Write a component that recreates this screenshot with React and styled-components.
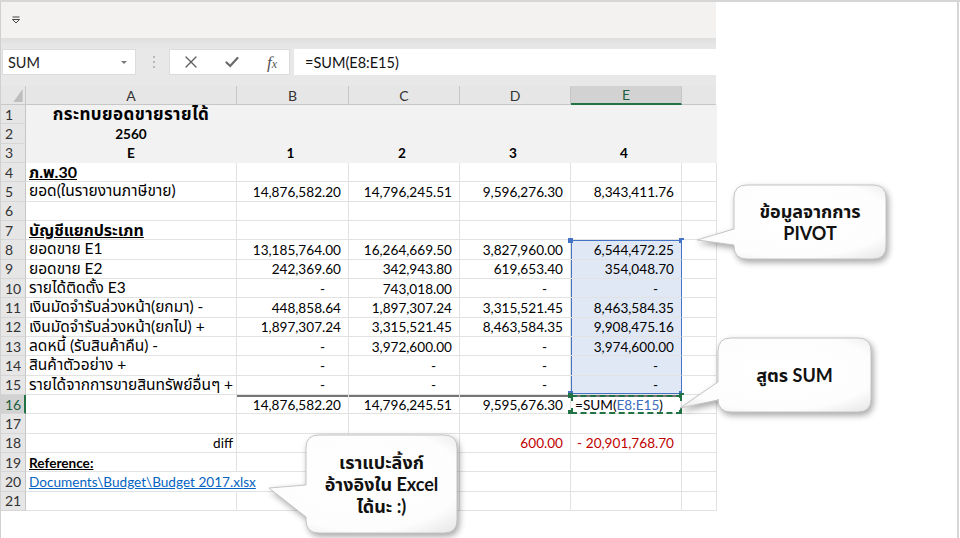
import styled, { createGlobalStyle } from "styled-components";

const FONT = `"Lato", "Noto Sans", "Noto Sans Thai", "Leelawadee UI", Tahoma, sans-serif`;

const GlobalStyle = createGlobalStyle`
  html, body {
    margin: 0;
    padding: 0;
    background: #fff;
  }
  body {
    font-family: ${FONT};
    overflow: hidden;
  }
`;

const COLS = "25px 211px 112px 111px 111px 111px 35px";
const ROW_H = 19.33;
const THAI = /[\u0E00-\u0E7F]/;

const rows = [
  { n: 1, band: true, a: "กระทบยอดขายรายได้", aKind: "title", big: true },
  { n: 2, band: true, a: "2560", aKind: "title" },
  { n: 3, band: true, a: "E", aKind: "title", vals: ["1", "2", "3", "4"], valKind: "title" },
  { n: 4, a: "ภ.พ.30", aKind: "heading" },
  { n: 5, a: "ยอด(ในรายงานภาษีขาย)", vals: ["14,876,582.20", "14,796,245.51", "9,596,276.30", "8,343,411.76"] },
  { n: 6 },
  { n: 7, a: "บัญชีแยกประเภท", aKind: "heading" },
  { n: 8, a: "ยอดขาย E1", vals: ["13,185,764.00", "16,264,669.50", "3,827,960.00", "6,544,472.25"] },
  { n: 9, a: "ยอดขาย E2", vals: ["242,369.60", "342,943.80", "619,653.40", "354,048.70"] },
  { n: 10, a: "รายได้ติดตั้ง E3", vals: ["-", "743,018.00", "-", "-"] },
  { n: 11, a: "เงินมัดจำรับล่วงหน้า(ยกมา) -", vals: ["448,858.64", "1,897,307.24", "3,315,521.45", "8,463,584.35"] },
  { n: 12, a: "เงินมัดจำรับล่วงหน้า(ยกไป) +", vals: ["1,897,307.24", "3,315,521.45", "8,463,584.35", "9,908,475.16"] },
  { n: 13, a: "ลดหนี้ (รับสินค้าคืน) -", vals: ["-", "3,972,600.00", "-", "3,974,600.00"] },
  { n: 14, a: "สินค้าตัวอย่าง +", vals: ["-", "-", "-", "-"] },
  { n: 15, a: "รายได้จากการขายสินทรัพย์อื่นๆ +", vals: ["-", "-", "-", "-"] },
  { n: 16, vals: ["14,876,582.20", "14,796,245.51", "9,595,676.30", null], total: true },
  { n: 17 },
  { n: 18, a: "diff", aKind: "right", vals: ["", "", "600.00", "20,901,768.70"], red: true, negE: true },
  { n: 19, a: "Reference:", aKind: "heading" },
  { n: 20, a: "Documents\\Budget\\Budget 2017.xlsx", aKind: "link" },
  { n: 21 },
];

export default function App() {
  return (
    <>
      <GlobalStyle />
      <Page>
        <Excel>
          <Ribbon>
            <QuickAccess viewBox="0 0 10 10">
              <line x1="1.5" y1="2" x2="8.5" y2="2" />
              <path d="M1.5 4.5 L8.5 4.5 L5 8 Z" />
            </QuickAccess>
          </Ribbon>
          <RibbonShade />
          <FormulaBar>
            <NameBox>
              SUM
              <Caret />
            </NameBox>
            <Grip viewBox="0 0 4 16">
              <circle cx="2" cy="3" r="1" />
              <circle cx="2" cy="8" r="1" />
              <circle cx="2" cy="13" r="1" />
            </Grip>
            <FxBox>
              <BarIcon viewBox="0 0 14 14">
                <path d="M2 2 L12 12 M12 2 L2 12" />
              </BarIcon>
              <BarIcon viewBox="0 0 14 14" $bold>
                <path d="M1.5 7.5 L5.2 11 L12.5 3" />
              </BarIcon>
              <Fx>
                f<sub>x</sub>
              </Fx>
            </FxBox>
            <FormulaInput>=SUM(E8:E15)</FormulaInput>
          </FormulaBar>
          <Sheet>
            <Corner>
              <CornerMark viewBox="0 0 10 14">
                <path d="M10 0 L10 14 L0 14 Z" />
              </CornerMark>
            </Corner>
            {["A", "B", "C", "D", "E"].map((c) => (
              <ColHead key={c} $active={c === "E"}>
                {c}
              </ColHead>
            ))}
            <ColHead />
            {rows.map((r) => (
              <SheetRow key={r.n} row={r} />
            ))}
          </Sheet>
        </Excel>
        <Slide />

        <Callout
          $x={734}
          $y={183}
          $w={152}
          $h={74}
          tail={[44, 60, -37, 55]}
          id="c1"
          lines={["ข้อมูลจากการ", "PIVOT"]}
        />
        <Callout
          $x={718}
          $y={336}
          $w={153}
          $h={74}
          tail={[44, 62, -38, 70]}
          id="c2"
          lines={["สูตร SUM"]}
        />
        <Callout
          $x={306}
          $y={433}
          $w={151}
          $h={98}
          tail={[50, 82, -37, 53]}
          id="c3"
          lines={["เราแปะลิ้งก์", "อ้างอิงใน Excel", "ได้นะ :)"]}
        />
      </Page>
    </>
  );
}

function SheetRow({ row }) {
  const { n, band, a, aKind, big, vals = [], valKind, total, red, negE } = row;
  const color = red ? "#c00000" : undefined;

  return (
    <>
      <RowHead $active={n === 16}>{n}</RowHead>
      <Cell
        $band={band}
        $align={aKind === "title" ? "center" : aKind === "right" ? "right" : "left"}
        $bold={aKind === "title" || aKind === "heading"}
        $under={aKind === "heading"}
        $thai={a && THAI.test(a)}
        $big={big}
        $overflow={aKind === "link"}
      >
        {aKind === "link" ? <Link>{a}</Link> : a}
      </Cell>
      {[0, 1, 2, 3].map((i) => {
        const v = vals[i];
        const isE = i === 3;
        const sel = isE && n >= 8 && n <= 15;

        if (isE && total) {
          return (
            <FormulaCell key={i} $rule>
              =SUM(<Ref>E8:E15</Ref>)
              <Handle $corner="tl" $green />
              <Handle $corner="tr" $green />
              <Handle $corner="bl" $green />
              <Handle $corner="br" $green />
            </FormulaCell>
          );
        }

        return (
          <Cell
            key={i}
            $band={band}
            $align={valKind === "title" ? "center" : "right"}
            $bold={valKind === "title"}
            $padR={v === "-" ? 23 : 7}
            $color={color}
            $sel={sel}
            $selTop={sel && n === 8}
            $selBottom={sel && n === 15}
            $rule={total}
          >
            {isE && negE && <Dash>-</Dash>}
            {v}
            {sel && n === 8 && (
              <>
                <Handle $corner="tl" />
                <Handle $corner="tr" />
              </>
            )}
            {sel && n === 15 && (
              <>
                <Handle $corner="bl" />
                <Handle $corner="br" />
              </>
            )}
          </Cell>
        );
      })}
      <Cell $band={band} />
    </>
  );
}

function Callout({ $x, $y, $w, $h, tail, id, lines }) {
  const [y1, y2, tx, ty] = tail;
  const r = 13;
  const d = `M${r},0 H${$w - r} Q${$w},0 ${$w},${r} V${$h - r} Q${$w},${$h} ${$w - r},${$h} H${r} Q0,${$h} 0,${$h - r} V${y2} L${tx},${ty} L0,${y1} V${r} Q0,0 ${r},0 Z`;

  return (
    <CalloutBox $x={$x} $y={$y} $w={$w} $h={$h}>
      <CalloutShape width={$w} height={$h}>
        <defs>
          <radialGradient id={`${id}-fill`} cx="50%" cy="45%" r="75%">
            <stop offset="0%" stopColor="#ffffff" />
            <stop offset="70%" stopColor="#fdfdfd" />
            <stop offset="100%" stopColor="#e4e4e4" />
          </radialGradient>
        </defs>
        <path d={d} fill={`url(#${id}-fill)`} stroke="#c4c4c4" strokeWidth="1" />
      </CalloutShape>
      <CalloutText>
        {lines.map((l) => (
          <div key={l}>{l}</div>
        ))}
      </CalloutText>
    </CalloutBox>
  );
}

const Page = styled.div`
  position: relative;
  width: 960px;
  height: 538px;
  box-sizing: border-box;
  border-top: 2px solid #d6d6d6;
  display: flex;
  overflow: hidden;
`;

const Excel = styled.div`
  width: 716px;
  display: flex;
  flex-direction: column;
  border-left: 1px solid #d0d0d0;
  box-sizing: border-box;
`;

const Slide = styled.div`
  flex: 1;
  margin-right: 1px;
  border-right: 2px solid #d6d6d6;
  background: #fff;
`;

const Ribbon = styled.div`
  height: 36px;
  background: #f3f2f1;
  display: flex;
  align-items: center;
  padding-left: 10px;
`;

const QuickAccess = styled.svg`
  width: 10px;
  height: 10px;
  fill: none;
  stroke: #444;
  stroke-width: 1;
`;

const RibbonShade = styled.div`
  height: 11px;
  background: linear-gradient(#dedede, #e6e6e6 60%, #e8e8e8);
`;

const FormulaBar = styled.div`
  height: 26px;
  padding: 0 0 11px 1px;
  background: #e8e8e8;
  display: flex;
  align-items: stretch;
`;

const NameBox = styled.div`
  width: 134px;
  box-sizing: border-box;
  background: #fff;
  border: 1px solid #dcdcdc;
  display: flex;
  align-items: center;
  justify-content: space-between;
  padding: 0 8px 0 5px;
  font-size: 14.5px;
  color: #222;
`;

const Caret = styled.span`
  width: 0;
  height: 0;
  border-left: 3px solid transparent;
  border-right: 3px solid transparent;
  border-top: 3px solid #7a7a7a;
`;

const Grip = styled.svg`
  width: 4px;
  height: 16px;
  align-self: center;
  margin: 0 13px 0 16px;
  fill: #a8a8a8;
`;

const FxBox = styled.div`
  width: 121px;
  box-sizing: border-box;
  background: #fff;
  border: 1px solid #dcdcdc;
  display: flex;
  align-items: center;
  justify-content: space-between;
  padding: 0 12px 0 14px;
  margin-right: 4px;
`;

const BarIcon = styled.svg`
  width: 14px;
  height: 14px;
  fill: none;
  stroke: ${(p) => (p.$bold ? "#6a6a6a" : "#5a5a5a")};
  stroke-width: ${(p) => (p.$bold ? 2.2 : 1.3)};
  stroke-linecap: round;
`;

const Fx = styled.span`
  font-family: "Liberation Serif", "DejaVu Serif", serif;
  font-style: italic;
  font-size: 17px;
  color: #555;
  line-height: 1;

  sub {
    font-size: 12px;
    vertical-align: 0;
  }
`;

const FormulaInput = styled.div`
  flex: 1;
  background: #fff;
  display: flex;
  align-items: center;
  padding-left: 11px;
  font-size: 14.5px;
  color: #111;
`;

const Sheet = styled.div`
  display: grid;
  grid-template-columns: ${COLS};
  grid-template-rows: 19px repeat(21, ${ROW_H}px);
  background: #fff;
`;

const Corner = styled.div`
  background: #e6e6e6;
  border-right: 1px solid #c8c8c8;
  border-bottom: 1px solid #c8c8c8;
  display: flex;
  align-items: flex-end;
  justify-content: flex-end;
  padding: 0 2px 2px 0;
`;

const CornerMark = styled.svg`
  width: 10px;
  height: 13px;
  fill: #bdbdbd;
`;

const ColHead = styled.div`
  box-sizing: border-box;
  background: ${(p) => (p.$active ? "#d2d2d2" : "#e6e6e6")};
  color: ${(p) => (p.$active ? "#1d5e3c" : "#333")};
  border-right: 1px solid #c6c6c6;
  border-bottom: ${(p) => (p.$active ? "2px solid #217346" : "1px solid #c6c6c6")};
  display: flex;
  align-items: center;
  justify-content: center;
  font-size: 14px;
`;

const RowHead = styled.div`
  box-sizing: border-box;
  background: ${(p) => (p.$active ? "#d2d2d2" : "#e6e6e6")};
  color: ${(p) => (p.$active ? "#1d5e3c" : "#333")};
  border-bottom: 1px solid #d6d6d6;
  border-right: ${(p) => (p.$active ? "2px solid #217346" : "1px solid #c6c6c6")};
  display: flex;
  align-items: center;
  padding-left: 4px;
  font-size: 14px;
`;

const justify = { left: "flex-start", center: "center", right: "flex-end" };

const selShadow = (p) => {
  const s = [];
  if (p.$rule) s.push("inset 0 2px 0 #767676");
  if (p.$sel) s.push("inset 1px 0 0 #4472c4");
  if (p.$selTop) s.push("inset 0 1px 0 #4472c4");
  if (p.$selBottom) s.push("inset 0 -1px 0 #4472c4");
  return s.length ? s.join(", ") : "none";
};

const fontSize = (p) => {
  if (p.$big) return "17px";
  if (!p.$thai) return "13.6px";
  return p.$bold ? "16px" : "15.5px";
};

const Cell = styled.div`
  position: relative;
  z-index: ${(p) => (p.$overflow ? 1 : "auto")};
  box-sizing: border-box;
  min-width: 0;
  display: flex;
  align-items: center;
  justify-content: ${(p) => justify[p.$align || "left"]};
  padding: 1px ${(p) => p.$padR ?? 3}px 0 3px;
  white-space: nowrap;
  font-size: ${fontSize};
  letter-spacing: ${(p) => (p.$big ? "0.4px" : "normal")};
  color: ${(p) => p.$color || "#000"};
  font-weight: ${(p) => (p.$bold ? 700 : 400)};
  text-decoration: ${(p) => (p.$under ? "underline" : "none")};
  background: ${(p) => (p.$band ? "#f2f2f2" : p.$sel ? "#e1e8f5" : "#fff")};
  border-right: 1px solid
    ${(p) =>
      p.$band || p.$overflow ? (p.$band ? "#f2f2f2" : "#fff") : p.$sel ? "#4472c4" : "#e2e2e2"};
  border-bottom: 1px solid ${(p) => (p.$band ? "#f2f2f2" : "#e2e2e2")};
  box-shadow: ${selShadow};
`;

const FormulaCell = styled(Cell)`
  justify-content: flex-start;
  padding-left: 4px;
  outline: 2px dashed #217346;
  outline-offset: -2px;
  box-shadow: inset 0 2px 0 #767676;
`;

const Dash = styled.span`
  position: absolute;
  left: 6px;
  top: 1px;
`;

const Ref = styled.span`
  color: #3c6dbf;
`;

const Link = styled.span`
  color: #0563c1;
  text-decoration: underline;
`;

const handlePos = {
  tl: "top: -2px; left: -3px;",
  tr: "top: -2px; right: -3px;",
  bl: "bottom: -2px; left: -3px;",
  br: "bottom: -2px; right: -3px;",
};

const Handle = styled.span`
  position: absolute;
  width: 5px;
  height: 5px;
  background: ${(p) => (p.$green ? "#217346" : "#4472c4")};
  ${(p) => handlePos[p.$corner]}
`;

const CalloutBox = styled.div`
  position: absolute;
  z-index: 2;
  left: ${(p) => p.$x}px;
  top: ${(p) => p.$y}px;
  width: ${(p) => p.$w}px;
  height: ${(p) => p.$h}px;
  display: flex;
  align-items: center;
  justify-content: center;
`;

const CalloutShape = styled.svg`
  position: absolute;
  left: 0;
  top: 0;
  overflow: visible;
  filter: drop-shadow(2px 3px 3px rgba(0, 0, 0, 0.35));
`;

const CalloutText = styled.div`
  position: relative;
  text-align: center;
  font-family: ${FONT};
  font-weight: 700;
  font-size: 18px;
  line-height: 22px;
  color: #111;
`;
